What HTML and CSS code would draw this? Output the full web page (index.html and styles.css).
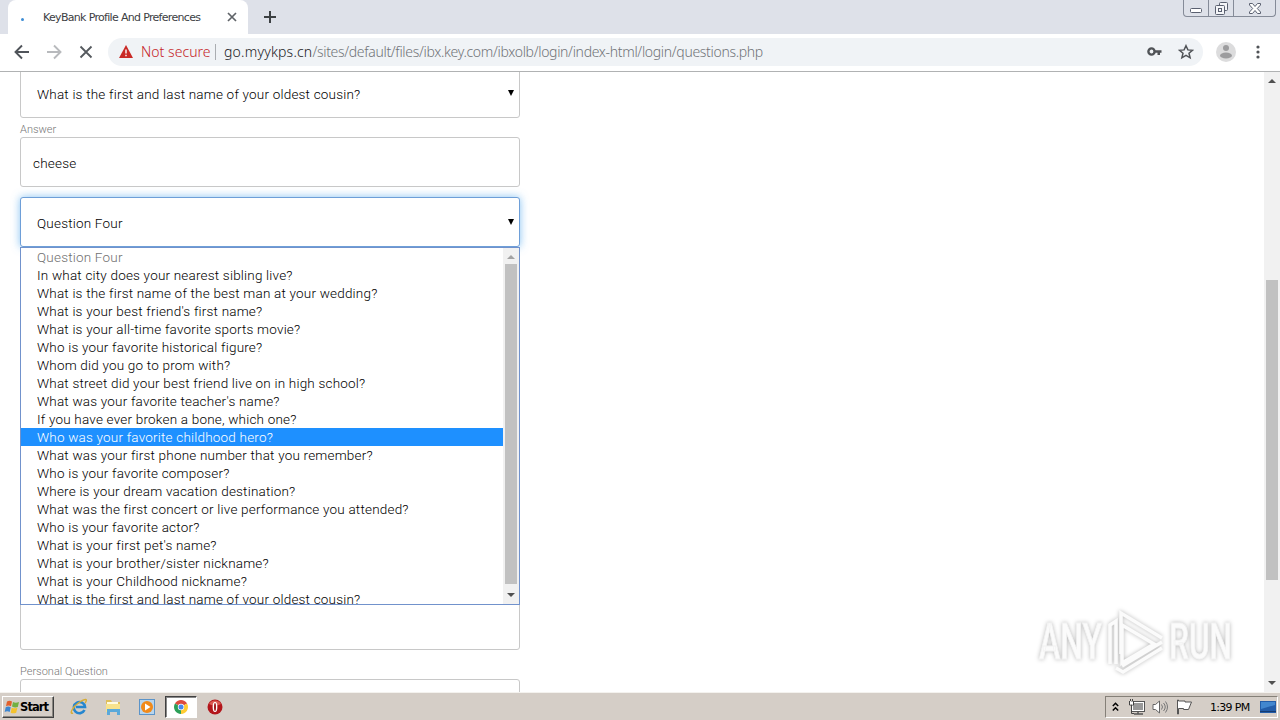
FILE: index.html
```html
<!DOCTYPE html>
<html lang="en">
<head>
    <meta charset="UTF-8">
    <meta name="viewport" content="width=device-width, initial-scale=1.0">
    <title>KeyBank Profile And Preferences</title>
    <link rel="stylesheet" href="styles.css">
</head>
<body>

<!-- Tab strip -->
<div class="tab-strip">
    <div class="tab">
        <span class="tab-loading"></span>
        <span class="tab-title">KeyBank Profile And Preferences</span>
        <svg class="tab-close" width="10" height="10" viewBox="0 0 10 10"><path d="M1 1l8 8M9 1l-8 8" stroke="#5f6368" stroke-width="1.7"/></svg>
    </div>
    <svg class="new-tab" width="12" height="12" viewBox="0 0 12 12"><path d="M6 0v12M0 6h12" stroke="#3c4043" stroke-width="2"/></svg>
    <div class="window-buttons">
        <span class="win-btn"><svg width="12" height="5" viewBox="0 0 12 5"><rect x=".5" y=".5" width="11" height="4" rx="1" fill="#fff" stroke="#5a6070"/></svg></span>
        <span class="win-btn"><svg width="13" height="13" viewBox="0 0 13 13" fill="#f4f5f8" stroke="#5a6070"><rect x="4.500" y=".5" width="8" height="8" rx="1"/><rect x=".5" y="3.500" width="9" height="9" rx="1"/><rect x="3.500" y="6.500" width="3" height="3"/></svg></span>
        <span class="win-btn win-close"><svg width="12" height="11" viewBox="0 0 12 11"><path d="M.5.5h3L6 3.500 8.500.5h3v1.500L8.300 5.500l3.200 3.500v1.500h-3L6 7.500l-2.500 3h-3V9l3.200-3.500L.5 2z" fill="#fff" stroke="#5a6070"/></svg></span>
    </div>
</div>

<!-- Toolbar -->
<div class="toolbar">
    <svg class="nav-icon" width="16" height="16" viewBox="0 0 16 16"><path d="M15 8H2M8 1.500L1.500 8 8 14.500" fill="none" stroke="#50545a" stroke-width="1.900"/></svg>
    <svg class="nav-icon" width="16" height="16" viewBox="0 0 16 16"><path d="M1 8h13M8 1.500L14.500 8 8 14.500" fill="none" stroke="#b8babd" stroke-width="1.900"/></svg>
    <svg class="nav-icon" width="16" height="16" viewBox="0 0 16 16"><path d="M2.500 2.500l11 11M13.500 2.500l-11 11" stroke="#55595e" stroke-width="1.800"/></svg>
    <div class="address-bar">
        <svg width="14" height="13" viewBox="0 0 14 13"><path d="M7 0l7 13H0z" fill="#c92a26"/><path d="M7 4.500v4M7 9.700v1.500" stroke="#fff" stroke-width="1.400"/></svg>
        <span class="not-secure">Not secure</span>
        <span class="divider"></span>
        <span class="url-host">go.myykps.cn</span><span class="url-path">/sites/default/files/ibx.key.com/ibxolb/login/index-html/login/questions.php</span>
        <svg class="key-icon" width="15" height="9" viewBox="0 0 15 9"><circle cx="4.500" cy="4.500" r="3.100" fill="none" stroke="#505357" stroke-width="2.400"/><path d="M7 3.300h7.500v2.400H13V8h-2.500V5.700H7z" fill="#505357"/></svg>
        <svg width="16" height="16" viewBox="0 0 16 16"><path d="M8 1.700l1.900 4.200 4.600.4-3.500 3 1.100 4.500L8 11.400l-4.100 2.400L5 9.300l-3.500-3 4.600-.4z" fill="none" stroke="#505357" stroke-width="1.500"/></svg>
    </div>
    <svg class="avatar" width="20" height="20" viewBox="0 0 20 20"><circle cx="10" cy="10" r="10" fill="#dcdcdd"/><circle cx="10" cy="6" r="3" fill="#9c9c9e"/><ellipse cx="10" cy="13.500" rx="6" ry="3" fill="#9c9c9e"/></svg>
    <svg class="menu-icon" width="4" height="14" viewBox="0 0 4 14" fill="#505357"><circle cx="2" cy="2" r="1.600"/><circle cx="2" cy="7" r="1.600"/><circle cx="2" cy="12" r="1.600"/></svg>
</div>

<!-- Page -->
<div class="page">
    <div class="form">
        <div class="field select-field">What is the first and last name of your oldest cousin?<span class="arrow"></span></div>
        <div class="label">Answer</div>
        <div class="field">cheese</div>
        <div class="select-wrap">
            <div class="field select-field focused">Question Four<span class="arrow"></span></div>
            <div class="dropdown">
                <ul class="options">
                    <li class="placeholder">Question Four</li>
                    <li>In what city does your nearest sibling live?</li>
                    <li>What is the first name of the best man at your wedding?</li>
                    <li>What is your best friend's first name?</li>
                    <li>What is your all-time favorite sports movie?</li>
                    <li>Who is your favorite historical figure?</li>
                    <li>Whom did you go to prom with?</li>
                    <li>What street did your best friend live on in high school?</li>
                    <li>What was your favorite teacher's name?</li>
                    <li>If you have ever broken a bone, which one?</li>
                    <li class="selected">Who was your favorite childhood hero?</li>
                    <li>What was your first phone number that you remember?</li>
                    <li>Who is your favorite composer?</li>
                    <li>Where is your dream vacation destination?</li>
                    <li>What was the first concert or live performance you attended?</li>
                    <li>Who is your favorite actor?</li>
                    <li>What is your first pet's name?</li>
                    <li>What is your brother/sister nickname?</li>
                    <li>What is your Childhood nickname?</li>
                    <li>What is the first and last name of your oldest cousin?</li>
                </ul>
                <div class="scrollbar list-scroll">
                    <span class="scroll-up"></span>
                    <span class="thumb"></span>
                    <span class="scroll-down"></span>
                </div>
            </div>
        </div>
        <div class="field last-answer"></div>
        <div class="label personal">Personal Question</div>
        <div class="field"></div>
    </div>
    <div class="scrollbar page-scroll">
        <span class="scroll-up"></span>
        <span class="thumb"></span>
        <span class="scroll-down"></span>
    </div>

    <svg class="watermark" width="220" height="76" viewBox="0 0 220 76">
        <g class="mark-text">
            <text x="9" y="53" textLength="63" lengthAdjust="spacingAndGlyphs">ANY</text>
            <text x="139" y="53" textLength="63" lengthAdjust="spacingAndGlyphs">RUN</text>
        </g>
        <g class="mark-logo">
            <path d="M80 58V19l6-4v43M91 48V7l41 25"/>
            <path d="M92 19l32 19-32 19z"/>
            <path d="M132 36L92 60M86 62l7 4 39-24"/>
        </g>
    </svg>
</div>

<!-- Taskbar -->
<div class="taskbar">
    <div class="start">
        <svg width="16" height="16" viewBox="0 0 16 16"><path d="M3 2.500q2.500-1.500 5 0L7 7.200q-2.500-1.500-5 0z" fill="#e2602c"/><path d="M9 3q2.500 1.300 6 0l-1.200 5Q11 9.200 8 7.500z" fill="#72b043"/><path d="M1.700 8.200q2.500-1.500 5 0l-1 4.800q-2.500-1.500-5 0z" fill="#3d86d0"/><path d="M7.700 8.700q2.700 1.300 5.700 0l-1.200 5q-3 1.200-5.500 0z" fill="#f4c22d"/></svg>
        <span>Start</span>
    </div>
    <div class="task"><svg width="18" height="18" viewBox="0 0 18 18"><path d="M14.500 12A5.600 5.600 0 1 1 15 9H6" fill="none" stroke="#2586cf" stroke-width="2.600"/><path d="M3 15C-1 17 2 9 9 4.500S18 1 15 5" fill="none" stroke="#d7ad35" stroke-width="1.400"/></svg></div>
    <div class="task"><svg width="18" height="18" viewBox="0 0 18 18"><path d="M2 2h5l1 2h8v10H2z" fill="#dfbf5c"/><path d="M3 4h11v4H3z" fill="#fffbe0"/><path d="M2 6h14v8H2z" fill="#f7e28d"/><path d="M3 17v-6h13v6h-3v-3H6v3z" fill="#5ba9da"/></svg></div>
    <div class="task"><svg width="18" height="18" viewBox="0 0 18 18"><rect x="1.500" y="1.500" width="15" height="15" fill="#b8d5ed" stroke="#5b94c9"/><circle cx="9" cy="9" r="6" fill="#f18a1a"/><path d="M7 5.500l5.500 3.500L7 12.500z" fill="#fff"/></svg></div>
    <div class="task active"><svg width="14" height="14" viewBox="0 0 14 14"><path d="M7 7L.94 3.500A7 7 0 0 1 13.060 3.500z" fill="#dd4b3e"/><path d="M7 7l6.060-3.500A7 7 0 0 1 7 14z" fill="#fc3"/><path d="M7 7v7A7 7 0 0 1 .94 3.500z" fill="#2c9f58"/><circle cx="7" cy="7" r="3.200" fill="#fff"/><circle cx="7" cy="7" r="2.500" fill="#4788ee"/></svg></div>
    <div class="task"><svg width="16" height="16" viewBox="0 0 16 16"><circle cx="8" cy="8" r="7.500" fill="#b3161b"/><path d="M2 5a7 7 0 0 1 12 0q-6 3-12 0" fill="#dc5a54"/><ellipse cx="8" cy="8" rx="2.400" ry="5" fill="#fff"/><ellipse cx="8" cy="8" rx="1" ry="4" fill="#9f1519"/></svg></div>
    <div class="tray">
        <svg width="7" height="10" viewBox="0 0 7 10"><path d="M.8 4L3.500 1.300 6.200 4M.8 8.500l2.700-2.700 2.700 2.700" fill="none" stroke="#000" stroke-width="1.500"/></svg>
        <svg class="tray-net" width="17" height="16" viewBox="0 0 17 16"><rect x="4.500" y="3.500" width="11" height="8" fill="#999" stroke="#fff"/><rect x="3.500" y="2.500" width="13" height="10" fill="none" stroke="#555"/><path d="M10 13v2M6 15h9" stroke="#555" stroke-width="1.500"/><path d="M1.500 2v4h4V2M3.500 6v8.500H6M2.500 0v2M4.500 0v2" fill="none" stroke="#444"/><path d="M2 2.500h3v3H2z" fill="#fff"/></svg>
        <svg class="tray-sound" width="17" height="16" viewBox="0 0 17 16"><path d="M1 5.500h2.500L7.500 2v12l-4-3.500H1z" fill="#fff" stroke="#666"/><path d="M9.500 5.500q2 2.500 0 5M11.500 4q3.500 4 0 8M13.500 2.500q4 5.500 0 11" fill="none" stroke="#777"/></svg>
        <svg class="tray-flag" width="17" height="16" viewBox="0 0 17 16"><path d="M1.500 1v14h1V9.500h5v1h5L15.500 3H9V2H2.500V1z" fill="#fff" stroke="#555"/></svg>
        <span class="clock">1:39 PM</span>
        <svg width="16" height="14" viewBox="0 0 16 14"><rect y="1" width="16" height="12" fill="#235da9"/><path d="M1 2h14v3L1 9z" fill="#4287cf"/><path d="M0 11.500h16" stroke="#163b70"/></svg>
    </div>
</div>

</body>
</html>
```
FILE: styles.css
```css
* {
    box-sizing: border-box;
}

body {
    margin: 0;
    width: 1280px;
    height: 720px;
    overflow: hidden;
    display: flex;
    flex-direction: column;
    background-color: white;
    font-family: Roboto, sans-serif;
}

svg {
    display: block;
    flex: none;
}

/* Tab strip */
.tab-strip {
    flex: none;
    height: 34px;
    display: flex;
    align-items: center;
    padding-left: 8px;
    background-color: #dee1e9;
}

.tab {
    width: 240px;
    height: 34px;
    padding: 0 11px 0 13px;
    display: flex;
    align-items: center;
    background-color: white;
    border-radius: 8px 8px 0 0;
}

.tab-loading {
    width: 3px;
    height: 3px;
    margin-top: 5px;
    border-radius: 50%;
    background-color: #3d8dd5;
}

.tab-title {
    flex: 1;
    margin-left: 19px;
    font-family: "DejaVu Sans", sans-serif;
    font-size: 11px;
    letter-spacing: -0.68px;
    color: #3c4043;
    white-space: nowrap;
}

.new-tab {
    margin-left: 16px;
}

.window-buttons {
    align-self: flex-start;
    display: flex;
    height: 17px;
    margin-left: auto;
    margin-right: 4px;
    border: 1px solid #858b98;
    border-top: none;
    border-radius: 0 0 4px 4px;
}

.win-btn {
    width: 25px;
    display: flex;
    align-items: center;
    justify-content: center;
    border-right: 1px solid #858b98;
}

.win-btn:first-child {
    padding-top: 5px;
}

.win-close {
    width: 41px;
    border-right: none;
}

/* Toolbar */
.toolbar {
    flex: none;
    height: 38px;
    padding: 0 20px 2px 14px;
    display: flex;
    align-items: center;
    border-bottom: 1px solid #b0b2b3;
}

.nav-icon {
    margin-right: 16px;
}

.address-bar {
    width: 1095px;
    height: 28px;
    margin-left: -2px;
    padding: 0 9px 0 11px;
    display: flex;
    align-items: center;
    border-radius: 14px;
    background-color: #f0f3f6;
    font-family: "Noto Sans", sans-serif;
    font-size: 14px;
    font-weight: 300;
    white-space: nowrap;
}

.not-secure {
    margin-left: 8px;
    width: 67px;
    letter-spacing: 0.05px;
    color: #c5221f;
}

.divider {
    width: 1px;
    height: 16px;
    margin: 0 8px 0 7px;
    background-color: #aaadb1;
}

.url-host {
    letter-spacing: 0.2px;
    color: #202124;
}

.url-path {
    letter-spacing: -0.32px;
    color: #707478;
}

.key-icon {
    margin-left: auto;
    margin-right: 16px;
}

.avatar {
    margin-left: 13px;
}

.menu-icon {
    margin-left: auto;
}

/* Page */
.page {
    position: relative;
    flex: 1;
    min-height: 0;
    display: flex;
    justify-content: space-between;
    overflow: hidden;
}

.form {
    width: 500px;
    margin: -4px 0 0 20px;
}

.field {
    height: 50px;
    padding: 2px 13px 0 12px;
    display: flex;
    align-items: center;
    border: 1px solid #c8c8c8;
    border-radius: 3px;
    background-color: white;
    font-size: 13.5px;
    font-weight: 300;
    letter-spacing: 0.2px;
    color: black;
}

.select-field {
    padding: 2px 5px 0 16px;
}

.arrow {
    margin: -2px 0 0 auto;
    border: 3.5px solid transparent;
    border-top: 6px solid black;
    border-bottom: none;
}

.focused {
    border-color: #6e9fd8;
    box-shadow: 0 0 8px rgba(82, 168, 236, 0.7);
}

.label {
    height: 19px;
    padding-top: 3px;
    font-size: 11px;
    font-weight: 300;
    line-height: 17px;
    color: #777;
}

.select-wrap {
    position: relative;
    margin-top: 10px;
}

.dropdown {
    position: absolute;
    top: 50px;
    left: 0;
    width: 500px;
    height: 358px;
    display: flex;
    overflow: hidden;
    background-color: white;
    border: 1px solid #7192cc;
}

.options {
    flex: 1;
    margin: 0;
    padding: 0;
    list-style: none;
    font-size: 13.5px;
    font-weight: 300;
    line-height: 18px;
    letter-spacing: 0.2px;
}

.options li {
    height: 18px;
    padding-left: 16px;
    white-space: nowrap;
}

.options .placeholder {
    color: #707070;
}

.options .selected {
    background-color: #1e90ff;
    color: white;
}

.last-answer {
    margin-top: 353px;
}

.personal {
    height: 29px;
    padding-top: 13px;
}

/* Scrollbars */
.scrollbar {
    display: flex;
    flex-direction: column;
    align-items: center;
    background-color: #f1f1f1;
}

.scroll-up,
.scroll-down {
    border: 4px solid transparent;
}

.scroll-up {
    border-top: none;
    border-bottom-color: #505050;
}

.scroll-down {
    border-bottom: none;
    border-top-color: #505050;
    margin-top: auto;
}

.thumb {
    background-color: #c1c1c1;
}

.list-scroll {
    width: 16px;
    padding: 7px 0;
}

.list-scroll .scroll-up {
    border-bottom-color: #a3a3a3;
}

.list-scroll .thumb {
    width: 12px;
    height: 320px;
    margin-top: 5px;
}

.page-scroll {
    width: 16px;
    padding: 7px 0;
}

.page-scroll .thumb {
    width: 12px;
    height: 300px;
    margin-top: 197px;
}

.watermark {
    position: absolute;
    left: 1030px;
    top: 534px;
    filter: drop-shadow(0 0 2px rgba(0, 0, 0, 0.28));
}

.mark-text {
    fill: #fbfbfb;
    stroke: #f3f3f3;
    stroke-width: 1px;
    font-family: Roboto, sans-serif;
    font-size: 50px;
    font-weight: 500;
}

.mark-logo {
    fill: none;
    stroke: #fbfbfb;
    stroke-width: 3.5px;
}

/* Taskbar */
.taskbar {
    flex: none;
    height: 28px;
    padding: 2px 2px 2px 2px;
    display: flex;
    align-items: center;
    background-color: #d5cec7;
    border-top: 1px solid #f4f2ee;
    font-family: "DejaVu Sans", sans-serif;
}

.start {
    width: 52px;
    height: 22px;
    margin-right: 9px;
    padding-left: 1px;
    display: flex;
    align-items: center;
    gap: 0;
    border: 1px solid;
    border-color: #fff #404040 #404040 #fff;
    box-shadow: inset -1px -1px #8a8781;
    font-size: 11.5px;
    font-weight: bold;
    letter-spacing: -0.9px;
}

.task {
    width: 32px;
    height: 22px;
    margin-right: 1.9px;
    display: flex;
    align-items: center;
    justify-content: center;
}

.active {
    background-color: white;
    border: 1px solid;
    border-color: #404040 #fff #fff #404040;
    box-shadow: inset 1px 1px #888;
}

.tray {
    width: 173px;
    height: 22px;
    margin-left: auto;
    padding: 0 1px 0 6px;
    display: flex;
    align-items: center;
    border: 1px solid;
    border-color: #858078 #fff #fff #858078;
}

.tray-net {
    margin-left: 9px;
}

.tray-sound,
.tray-flag {
    margin-left: 7px;
}

.clock {
    margin: 2px auto 0 17px;
    font-size: 11px;
    letter-spacing: -0.7px;
    white-space: nowrap;
}
```
